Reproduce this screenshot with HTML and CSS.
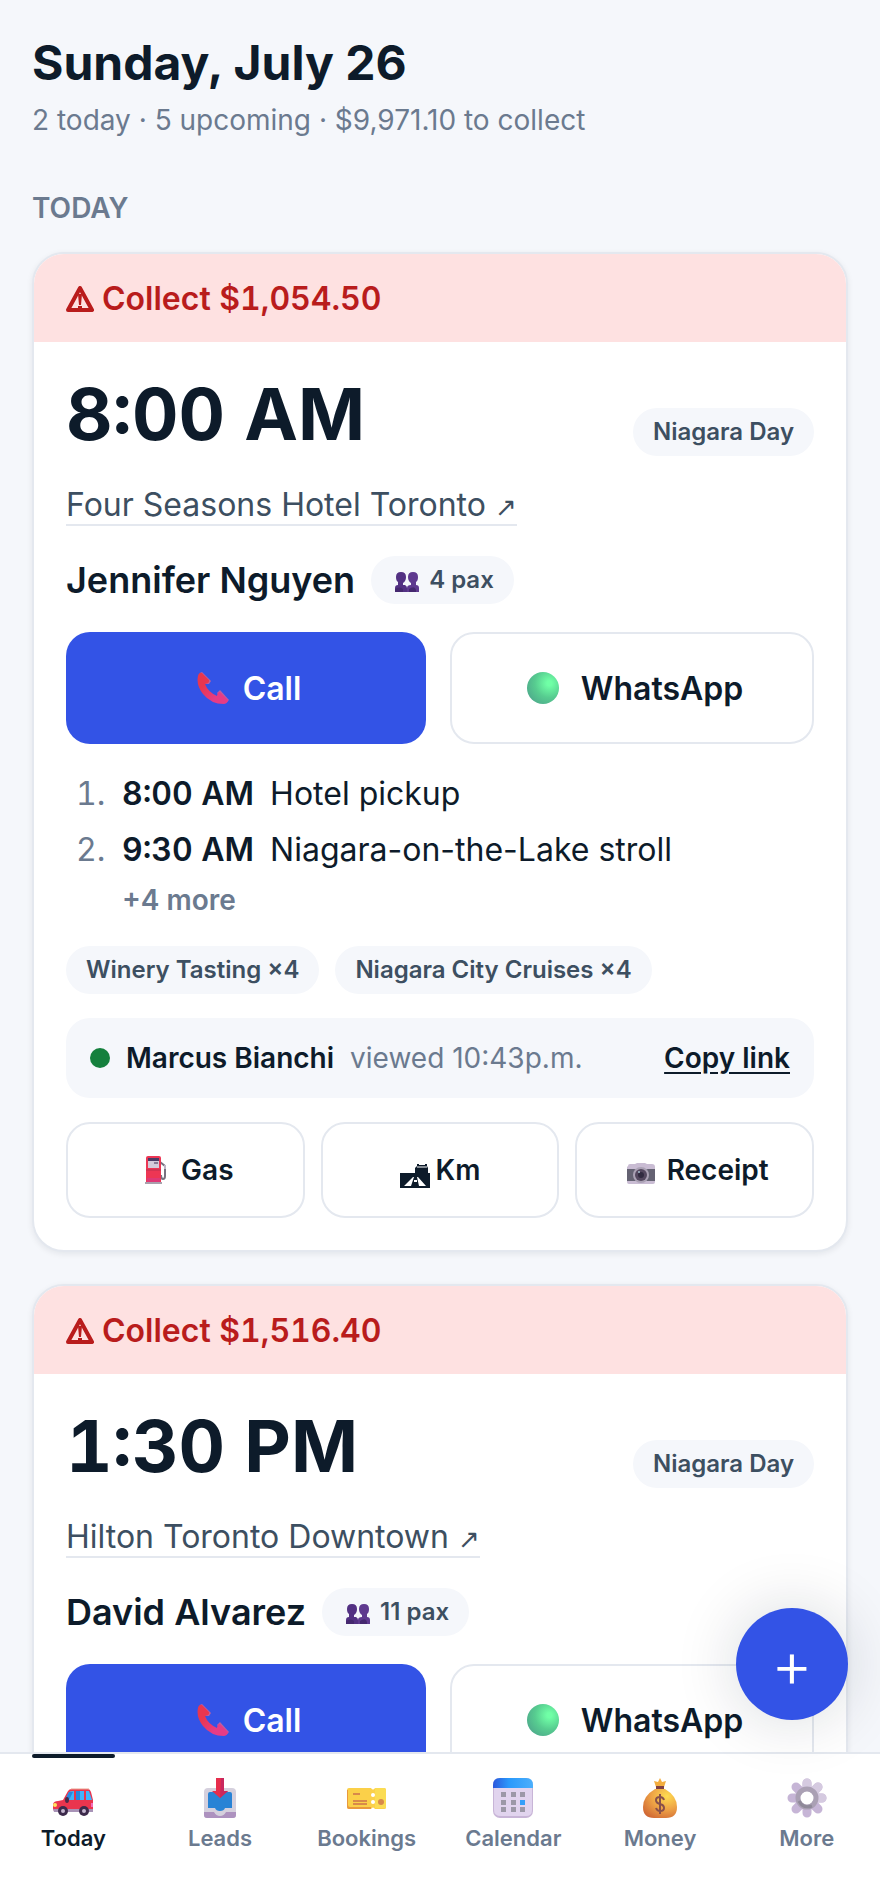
FILE: index.html
```html
<!DOCTYPE html>
<html lang="en">
<head>
  <meta charset="UTF-8" />
  <meta name="viewport" content="width=device-width, initial-scale=1.0"/>
  <title>Today</title>
  <link rel="stylesheet" href="styles.css">
</head>
<body>

  <!-- shared icons -->
  <svg class="sprite" aria-hidden="true">
    <defs>
      <linearGradient id="phone-fill" x1="0" y1="0" x2="1" y2="1">
        <stop offset="0.3" stop-color="#e8364f"/>
        <stop offset="0.7" stop-color="#e63c86"/>
      </linearGradient>
      <radialGradient id="dot-fill" cx="0.7" cy="0.35" r="0.75">
        <stop offset="0.1" stop-color="#70ffa6"/>
        <stop offset="0.6" stop-color="#57cc90"/>
        <stop offset="1" stop-color="#4fae8c"/>
      </radialGradient>
    </defs>
    <symbol id="icon-phone" viewBox="0 0 32 32">
      <path d="M3 1L5 0L14 9L12 12L7 12Z" fill="#bd5fa0"/>
      <path d="M20 21L23 18L32 28L29 31Z" fill="#bd5fa0"/>
      <path d="M1 4Q2 0 5 1L12 8Q13 11 8 12Q11 20 20 24Q21 18 24 21L31 28Q31 31 27 32Q14 32 6 22Q-1 13 1 4Z" fill="url(#phone-fill)"/>
    </symbol>
    <symbol id="icon-dot" viewBox="0 0 32 32">
      <circle cx="16" cy="16" r="16" fill="url(#dot-fill)"/>
    </symbol>
    <symbol id="icon-people" viewBox="0 0 24 20">
      <path d="M1 5Q1 0 6 0Q11 0 11 5Q11 9 8 11V13H10Q12 14 12 16V20H0V16Q0 13 3 13V10Q1 9 1 5Z" fill="#533183"/>
      <path d="M13 5Q13 0 18 0Q23 0 23 5Q23 9 21 10V13Q24 13 24 16V20H12V16Q12 13 16 13V11Q13 9 13 5Z" fill="#5f3a8f"/>
      <path d="M0 17Q5 14 8 17V20H0ZM14 17Q20 13 21 18V20H14Z" fill="#45286f"/>
    </symbol>
    <symbol id="icon-warning" viewBox="0 0 28 26">
      <path d="M14 2L26 24H2Z" fill="none" stroke="currentColor" stroke-width="4" stroke-linejoin="round"/>
      <path d="M12 8H16L15 19H13ZM12 20H16V24H12Z" fill="currentColor"/>
    </symbol>
  </svg>

  <div class="app">
    <main class="content">
      <header class="header">
        <h1 class="title">Sunday, July 26</h1>
        <p class="summary">2 today · 5 upcoming · $9,971.10 to collect</p>
      </header>

      <h2 class="section-label">TODAY</h2>

      <article class="card">
        <p class="banner"><svg class="icon-warning"><use href="#icon-warning"/></svg>Collect $1,054.50</p>
        <div class="card-body">
          <div class="time-row">
            <h3 class="time">8:00 AM</h3>
            <span class="chip">Niagara Day</span>
          </div>
          <a class="place" href="#">Four Seasons Hotel Toronto <span class="arrow">↗</span></a>
          <div class="guest">
            <strong class="guest-name">Jennifer Nguyen</strong>
            <span class="chip"><svg class="icon-people"><use href="#icon-people"/></svg>4 pax</span>
          </div>
          <div class="contact">
            <button class="btn btn--call" type="button"><svg class="icon-phone"><use href="#icon-phone"/></svg>Call</button>
            <button class="btn btn--chat" type="button"><svg class="icon-dot"><use href="#icon-dot"/></svg>WhatsApp</button>
          </div>
          <ol class="stops">
            <li><b class="stop-time">8:00 AM</b>Hotel pickup</li>
            <li><b class="stop-time">9:30 AM</b>Niagara-on-the-Lake stroll</li>
          </ol>
          <p class="more-stops">+4 more</p>
          <div class="extras">
            <span class="chip">Winery Tasting ×4</span>
            <span class="chip">Niagara City Cruises ×4</span>
          </div>
          <div class="driver">
            <span class="status"></span>
            <strong class="driver-name">Marcus Bianchi</strong>
            <span class="viewed">viewed 10:43p.m.</span>
            <button class="copy-link" type="button">Copy link</button>
          </div>
          <div class="log">
            <button class="btn btn--log" type="button">
              <svg class="icon-gas" viewBox="0 0 22 28">
                <path d="M15 6L20 10V20Q20 23 18 23Q16 23 16 19" fill="none" stroke="#77717f" stroke-width="2"/>
                <path d="M19 9H21V13H19Z" fill="#bcb4c5"/>
                <path d="M1 2Q1 0 3 0H14Q16 0 16 2V27H1Z" fill="#ed3654"/>
                <path d="M3 2H14V12H3Z" fill="#d4cbd9"/>
                <path d="M3 2H14V5H3Z" fill="#493b64"/>
                <path d="M9 6H13V8H9Z" fill="#887c94"/>
                <path d="M1 14H16" stroke="#b9314f"/>
                <path d="M2 22H15V26H2Z" fill="#df3876"/>
                <path d="M0 26H17V28H0Z" fill="#a9a0ad"/>
              </svg>Gas
            </button>
            <button class="btn btn--log" type="button">
              <svg class="icon-road" viewBox="0 0 30 24">
                <path d="M0 9H15V4L17 2V0H19V1H25V0H27V2L28 4V9H30V24H0Z" fill="#0d1b2a"/>
                <path d="M17 3H27" stroke="#fff"/>
                <path d="M13 13L4 22H11L14 13ZM17 13L19 22H26L18 13Z" fill="#fff"/>
                <path d="M14 16H17V18H14Z" fill="#fff"/>
              </svg>Km
            </button>
            <button class="btn btn--log" type="button">
              <svg class="icon-camera" viewBox="0 0 28 22">
                <path d="M1 3Q1 1 3 1H8L10 0H18L20 1H25Q28 1 28 4V19Q28 21 26 21H2Q0 21 0 19V4Z" fill="#c9bcd3"/>
                <path d="M0 6H28V18H0Z" fill="#646272"/>
                <circle cx="14" cy="12" r="8" fill="#aaa1b4"/>
                <circle cx="14" cy="12" r="6" fill="#54485f"/>
                <circle cx="14" cy="12" r="3" fill="#312b40"/>
                <circle cx="12" cy="9" r="1" fill="#a5bdcb"/>
              </svg>Receipt
            </button>
          </div>
        </div>
      </article>

      <article class="card">
        <p class="banner"><svg class="icon-warning"><use href="#icon-warning"/></svg>Collect $1,516.40</p>
        <div class="card-body">
          <div class="time-row">
            <h3 class="time">1:30 PM</h3>
            <span class="chip">Niagara Day</span>
          </div>
          <a class="place" href="#">Hilton Toronto Downtown <span class="arrow">↗</span></a>
          <div class="guest">
            <strong class="guest-name">David Alvarez</strong>
            <span class="chip"><svg class="icon-people"><use href="#icon-people"/></svg>11 pax</span>
          </div>
          <div class="contact">
            <button class="btn btn--call" type="button"><svg class="icon-phone"><use href="#icon-phone"/></svg>Call</button>
            <button class="btn btn--chat" type="button"><svg class="icon-dot"><use href="#icon-dot"/></svg>WhatsApp</button>
          </div>
        </div>
      </article>
    </main>

    <nav class="tabs">
      <a class="tab tab--active" href="#">
        <svg class="tab-icon" viewBox="0 0 40 40">
          <path d="M10 22L15 13Q16 11 19 11H35Q37 11 38 14L40 22V33H2Q0 33 0 30V26Q1 23 5 23Z" fill="#ea354e"/>
          <path d="M18 11H36" stroke="#e7a18e" stroke-width="1"/>
          <path d="M12 22L16 14Q17 13 21 13V22ZM23 13H31V22H23ZM33 13H36L39 22H33Z" fill="#42b4fb"/>
          <path d="M12 22L16 14H20L16 22ZM23 13H27V22H23Z" fill="#2888df"/>
          <path d="M0 31H40V34H1Z" fill="#a893b7"/>
          <circle cx="2" cy="27" r="2" fill="#ffe25c"/>
          <path d="M38 25H40V29H38Z" fill="#f56cba"/>
          <ellipse cx="14" cy="22" rx="2" ry="3" fill="#4c2847"/>
          <circle cx="10" cy="33" r="5" fill="#3c2a4b"/><circle cx="10" cy="33" r="2" fill="#c5b7d0"/>
          <circle cx="31" cy="33" r="5" fill="#3c2a4b"/><circle cx="31" cy="33" r="2" fill="#c5b7d0"/>
        </svg>
        Today
      </a>
      <a class="tab" href="#">
        <svg class="tab-icon" viewBox="0 0 40 40">
          <path d="M4 14Q4 10 8 10H32Q36 10 36 14V37Q36 40 33 40H7Q4 40 4 37Z" fill="#d5d0dd"/>
          <path d="M4 34H14Q16 38 20 38Q24 38 26 34H36V37Q36 40 33 40H7Q4 40 4 37Z" fill="#ad92bf"/>
          <path d="M8 16Q8 14 10 14H30Q32 14 32 16V30H25Q24 33 20 33Q16 33 15 30H8Z" fill="#2983d5"/>
          <path d="M16 0H24V13H28L20 20L12 13H16Z" fill="#e72e4c"/>
          <path d="M21 0H24V13H28L20 20Z" fill="#c9275d"/>
        </svg>
        Leads
      </a>
      <a class="tab" href="#">
        <svg class="tab-icon" viewBox="0 0 40 40">
          <path d="M2 10H24Q26 13 28 10H37Q39 10 39 12V30Q39 31 37 31H28Q26 28 24 31H2Q0 31 0 29V12Q0 10 2 10Z" fill="#fbd049"/>
          <path d="M0 12V29Q0 31 2 31H24V29H3Q1 29 1 27V12Z" fill="#e9993e"/>
          <path d="M28 10H37Q39 10 39 12V30H28Z" fill="#fbdc53"/>
          <path d="M6 16H13M6 23H20M6 26H20" stroke="#d8894a" stroke-width="2"/>
          <circle cx="26" cy="17" r="2" fill="#fff"/><circle cx="26" cy="24" r="2" fill="#fff"/>
          <circle cx="34" cy="24" r="3" fill="#d8894a"/>
        </svg>
        Bookings
      </a>
      <a class="tab" href="#">
        <svg class="tab-icon" viewBox="0 0 40 40">
          <defs>
            <linearGradient id="cal-top"><stop stop-color="#2c57dc"/><stop offset="0.4" stop-color="#2999fb"/><stop offset="1" stop-color="#4baffc"/></linearGradient>
          </defs>
          <rect width="40" height="40" rx="7" fill="#c8b5d7"/>
          <path d="M1 8H39V32Q39 38 33 38H8Q1 38 1 32Z" fill="#e1d4ee"/>
          <path d="M0 10V7Q0 0 7 0H33Q40 0 40 7V10Z" fill="url(#cal-top)"/>
          <path d="M8 14H13V19H8ZM18 14H23V19H18ZM27 14H32V19H27ZM8 22H13V27H8ZM18 22H23V27H18ZM8 29H13V34H8ZM18 29H23V34H18ZM27 29H32V34H27Z" fill="#9c98a7"/>
          <path d="M27 22H32V27H27Z" fill="#349ff9"/>
        </svg>
        Calendar
      </a>
      <a class="tab" href="#">
        <svg class="tab-icon" viewBox="0 0 40 40">
          <defs>
            <radialGradient id="bag" cx="0.7" cy="0.25" r="0.9"><stop stop-color="#ffdc50"/><stop offset="0.5" stop-color="#eea346"/><stop offset="1" stop-color="#ce6433"/></radialGradient>
          </defs>
          <path d="M14 3L18 4L20 0L22 4L26 3L24 9H16Z" fill="#f3ad3e"/>
          <path d="M15 11Q3 18 3 29Q3 40 14 40H26Q37 40 37 29Q37 18 25 11Z" fill="url(#bag)"/>
          <path d="M16 8H24V11H16Z" fill="#7f4044"/>
          <path d="M20 16V36M24 22Q23 19 20 19Q16 19 16 22Q16 25 20 26Q24 27 24 30Q24 33 20 33Q17 33 16 30" fill="none" stroke="#88504a" stroke-width="2"/>
        </svg>
        Money
      </a>
      <a class="tab" href="#">
        <svg class="tab-icon" viewBox="0 0 40 40">
          <path d="M20 5V35M5 20H35M9 9L31 31M31 9L9 31" stroke="#c6b5d6" stroke-width="9" stroke-linecap="round"/>
          <path d="M20 5V20M20 20L31 9M20 20H35" stroke="#d5cae0" stroke-width="9" stroke-linecap="round"/>
          <circle cx="20" cy="20" r="9" fill="#fff" stroke="#aaa0b4" stroke-width="5"/>
          <path d="M12 23Q16 31 25 28" fill="none" stroke="#8f8999" stroke-width="3"/>
          <circle cx="20" cy="20" r="6" fill="#fff"/>
        </svg>
        More
      </a>
    </nav>

    <button class="fab" type="button" aria-label="New booking">+</button>
  </div>

</body>
</html>
```
FILE: styles.css
```css
* {
  box-sizing: border-box;
  margin: 0;
  padding: 0;
}

body {
  font-family: Inter, "Liberation Sans", sans-serif;
  background: #f5f7fb;
  color: #0d1b2a;
}

button {
  font-family: inherit;
  color: inherit;
  cursor: pointer;
}

a {
  text-decoration: none;
}

.sprite {
  position: absolute;
  width: 0;
  height: 0;
}

.app {
  position: relative;
  height: 100vh;
  display: flex;
  flex-direction: column;
}

.content {
  flex: 1;
  min-height: 0;
  overflow-y: auto;
  scrollbar-width: none;
  padding: 32px;
}

/* header */
.title {
  font-size: 48px;
  line-height: 62px;
  font-weight: 700;
}

.summary {
  margin-top: 6px;
  font-size: 28px;
  line-height: 40px;
  color: #6b7a8f;
}

.section-label {
  margin: 48px 0 24px;
  font-size: 28px;
  line-height: 40px;
  font-weight: 600;
  color: #6b7a8f;
}

/* booking card */
.card {
  background: #fff;
  border: 2px solid #e4e8ef;
  border-radius: 32px;
  overflow: hidden;
  box-shadow: 0 2px 6px rgba(13, 27, 42, 0.08);
}

.card + .card {
  margin-top: 32px;
}

.banner {
  display: flex;
  align-items: center;
  gap: 8px;
  padding: 25px 32px 23px;
  background: #fee1e1;
  color: #b91c1c;
  font-size: 32px;
  line-height: 40px;
  font-weight: 600;
  font-variant-numeric: tabular-nums;
}

.card-body {
  padding: 32px;
}

.time-row {
  display: flex;
  justify-content: space-between;
  align-items: baseline;
}

.time {
  font-size: 72px;
  line-height: 80px;
  font-weight: 700;
  font-variant-numeric: tabular-nums;
}

.chip {
  display: inline-flex;
  align-items: center;
  padding: 8px 20px;
  border-radius: 24px;
  background: #f5f7fb;
  color: #3d4f61;
  font-size: 24px;
  line-height: 32px;
  font-weight: 600;
}

.place {
  display: block;
  width: fit-content;
  margin-top: 30px;
  border-bottom: 2px solid #e4e8ef;
  color: #3d4f61;
  font-size: 32px;
  line-height: 38px;
}

.arrow {
  font-family: "DejaVu Sans", sans-serif;
  font-size: 26px;
  line-height: 1;
}

.guest {
  display: flex;
  align-items: center;
  gap: 16px;
  margin: 30px 0 28px;
}

.guest-name {
  font-size: 36px;
  line-height: 48px;
  font-weight: 600;
}

.contact {
  display: flex;
  gap: 24px;
}

.btn {
  flex: 1;
  display: flex;
  justify-content: center;
  align-items: center;
  border: 2px solid #e4e8ef;
  border-radius: 24px;
  background: #fff;
  font-weight: 600;
}

.btn--call,
.btn--chat {
  height: 112px;
  gap: 14px;
  font-size: 32px;
}

.btn--call {
  border: none;
  background: #3353e6;
  color: #fff;
}

.stops {
  margin-top: 26px;
  padding-left: 48px;
  font-size: 32px;
  line-height: 48px;
}

.stops li {
  padding-left: 8px;
}

.stops li + li {
  margin-top: 8px;
}

.stops li::marker {
  color: #6b7a8f;
}

.stop-time {
  margin-right: 16px;
  font-weight: 600;
  font-variant-numeric: tabular-nums;
}

.more-stops {
  margin-top: 6px;
  padding-left: 56px;
  color: #6b7a8f;
  font-size: 28px;
  line-height: 40px;
  font-weight: 600;
}

.extras {
  display: flex;
  flex-wrap: wrap;
  gap: 16px;
  margin: 26px 0 24px;
}

.driver {
  display: flex;
  align-items: center;
  gap: 16px;
  padding: 20px 24px;
  border-radius: 24px;
  background: #f5f7fb;
  font-size: 28px;
  line-height: 40px;
}

.status {
  width: 20px;
  height: 20px;
  border-radius: 50%;
  background: #15803d;
}

.driver-name {
  font-weight: 600;
}

.viewed {
  color: #6b7a8f;
}

.copy-link {
  margin-left: auto;
  border: none;
  background: none;
  font-size: 28px;
  line-height: 40px;
  font-weight: 600;
  text-decoration: underline;
  text-underline-offset: 4px;
}

.log {
  display: flex;
  gap: 16px;
  margin-top: 24px;
}

.btn--log {
  height: 96px;
  font-size: 28px;
}

/* icons */
.icon-warning {
  width: 28px;
  height: 26px;
}

.icon-people {
  width: 24px;
  height: 20px;
  margin: 4px 10px 0 4px;
}

.icon-phone,
.icon-dot {
  width: 32px;
  height: 32px;
  margin-left: 6px;
}

.icon-dot {
  margin-right: 8px;
}

.icon-gas {
  width: 22px;
  height: 28px;
  margin: 0 14px 0 8px;
}

.icon-road {
  width: 30px;
  height: 24px;
  margin: 12px 6px 0 0;
}

.icon-camera {
  width: 28px;
  height: 22px;
  margin: 8px 12px 0 6px;
}

/* bottom tabs */
.tabs {
  display: grid;
  grid-template-columns: repeat(6, 1fr);
  border-top: 2px solid #e4e8ef;
  background: #fff;
}

.tab {
  position: relative;
  display: flex;
  flex-direction: column;
  align-items: center;
  gap: 2px;
  padding: 24px 0;
  color: #6b7a8f;
  font-size: 22px;
  line-height: 36px;
  font-weight: 600;
}

.tab--active {
  color: #0d1b2a;
}

.tab--active::before {
  content: "";
  position: absolute;
  top: 0;
  left: 32px;
  right: 32px;
  height: 4px;
  border-radius: 2px;
  background: #0d1b2a;
}

.tab-icon {
  width: 40px;
  height: 40px;
}

.fab {
  position: absolute;
  right: 32px;
  bottom: 160px;
  width: 112px;
  height: 112px;
  border: none;
  border-radius: 50%;
  background: #3353e6;
  color: #fff;
  font-size: 64px;
  font-weight: 300;
  line-height: 64px;
  box-shadow: 0 0 64px rgba(13, 27, 42, 0.16);
}
```
